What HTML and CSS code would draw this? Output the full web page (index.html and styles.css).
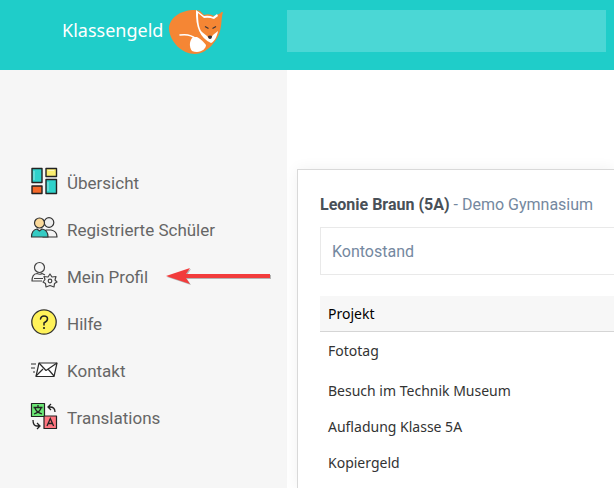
FILE: index.html
```html
<!DOCTYPE html>
<html lang="de">
<head>
    <meta charset="UTF-8">
    <title>Klassengeld</title>
    <link rel="stylesheet" href="styles.css">
</head>
<body>
<header class="header">
    <a href="#" class="logo">
        <span class="logo-text">Klassengeld</span>
        <svg class="logo-fox" viewBox="0 0 56 46" aria-hidden="true">
            <path fill="#f58634" d="M1 20C1 9 12 1 27 1L46 4L55 3C53 10 54 15 52 22C49 33 38 45 27 45C14 45 2 33 1 20Z"/>
            <path fill="#1fcdc9" d="M30 0L36 6Q41 4 46 7L53 4L52 0Z"/>
            <path fill="#fff" d="M28 1L36 7Q41 6 45 8L49 5L50 7L46 10Q41 8 36 9L30 4C30 13 31 20 34 23L39 27Q42 32 45 26L50 22C49 28 46 33 43 34Q27 27 28 1Z"/>
            <path fill="#fff" d="M38 36C34 31 31 29 29 28L25 28C21 32 21 38 24 42C32 45 38 40 38 36Z"/>
            <path fill="none" stroke="#fff" stroke-width="1.500" stroke-linecap="round" d="M12 26C19 25 25 27 28 30"/>
            <path fill="none" stroke="#3d3436" stroke-width="1.200" d="M37 17.500L40.500 19.500M48 17.500L44.500 19.500"/>
            <path fill="#3d3436" d="M40 27Q42 26 44 27Q44 30 42 30Q40 30 40 27Z"/>
        </svg>
    </a>
    <input type="search" class="search" aria-label="Suche">
</header>
<div class="layout">
    <nav class="sidebar">
        <a href="#" class="menu-item">
            <svg class="menu-icon" viewBox="0 0 28 28">
                <g stroke="#222" stroke-width="1.400" stroke-linejoin="round">
                    <path fill="#2fd2cb" d="M2 1.500H12V15.500H2ZM16 12.500H26.500V26.500H16Z"/>
                    <path fill="#fbee70" d="M16 1.500H26.500V9.500H16Z"/>
                    <path fill="#f4692a" d="M2 19H12V26.500H2Z"/>
                </g>
                <path fill="none" stroke="#fff" stroke-opacity=".5" d="M4 4V13M18 15V24M18 3.500H24"/>
            </svg>
            Übersicht
        </a>
        <a href="#" class="menu-item">
            <svg class="menu-icon" viewBox="0 0 28 28">
                <g stroke="#333" stroke-width="1.200" stroke-linejoin="round">
                    <path fill="#f4f4f4" d="M13 23H27Q27 17 21 16H16Z"/>
                    <circle cx="19" cy="8.500" r="4.800" fill="#eee"/>
                    <path fill="#35cbc3" d="M1.500 23Q1.500 16 7 15L9.500 17L12 15Q18 16 18 23Z"/>
                    <circle cx="9.500" cy="9" r="5" fill="#fbd99a"/>
                </g>
            </svg>
            Registrierte Schüler
        </a>
        <a href="#" class="menu-item">
            <svg class="menu-icon" viewBox="0 0 28 28">
                <g fill="none" stroke="#444" stroke-width="1.200" stroke-linejoin="round">
                    <circle cx="9.500" cy="6.500" r="5"/>
                    <path d="M12 20H2Q2 13 7 12.500Q10 14 12 12.500L15 14M13 17.500H4"/>
                    <path fill="#f5f5f5" d="M20 13L22 16L26 15.500L25 19L27 21L24.500 22.500L24 26L20 24.500L16 26L15.500 22.500L13 21L15 18.500L14 15.500L18 16Z"/>
                    <circle cx="20" cy="20" r="1.800"/>
                </g>
            </svg>
            Mein Profil
        </a>
        <a href="#" class="menu-item">
            <svg class="menu-icon" viewBox="0 0 28 28">
                <circle cx="14" cy="14" r="12.200" fill="#fff25a" stroke="#333" stroke-width="1.300"/>
                <path fill="none" stroke="#222" stroke-width="1.500" stroke-linecap="round" d="M10.500 11Q11 8 14 8Q17.500 8 17.500 11Q17.500 13 14 15V17"/>
                <circle cx="14" cy="20" r="1.100" fill="#222"/>
            </svg>
            Hilfe
        </a>
        <a href="#" class="menu-item">
            <svg class="menu-icon" viewBox="0 0 28 28">
                <g fill="none" stroke="#2b2b2b" stroke-width="1.200" stroke-linejoin="round">
                    <path fill="#fff" d="M9 8H27L24 21.500H6Z"/>
                    <path d="M9 8L16 15.500L27 8M6 21L13 14M24 21L18 14M1 9H6M1 13H5M3 17H5"/>
                </g>
            </svg>
            Kontakt
        </a>
        <a href="#" class="menu-item">
            <svg class="menu-icon" viewBox="0 0 28 28">
                <g stroke="#222" stroke-width="1.200" stroke-linejoin="round">
                    <path fill="#6be675" d="M1.500 1.500H14.500V14.500H1.500Z"/>
                    <path fill="#ff7680" d="M14 14H26.500V26.500H14Z"/>
                </g>
                <g fill="none" stroke="#222" stroke-width="1.300">
                    <path d="M8 3V5M3.500 5.500H12.500M5 6Q6 10 12 12M11 6Q10 10 4 12"/>
                    <path d="M17 24L20.300 16.500L23.600 24M18 21.500H23"/>
                    <path d="M18 5H20Q25 5 25 10M21 2L18 5L21 8M3 18Q3 24 7 24H9M7 21L10 24L7 27"/>
                </g>
            </svg>
            Translations
        </a>
        <svg class="pointer" viewBox="0 0 106 20" aria-hidden="true">
            <path fill="#888" fill-opacity=".6" d="M1 11L25 3L21 9H105V13H21L25 19Z"/>
            <path fill="#f23c3c" d="M0 10L24 2L20 8H104V12H20L24 18Z"/>
        </svg>
    </nav>
    <main class="content">
        <section class="card">
            <h1 class="student"><strong>Leonie Braun (5A)</strong> - Demo Gymnasium</h1>
            <div class="balance">Kontostand</div>
            <table class="projects">
                <thead>
                    <tr><th>Projekt</th></tr>
                </thead>
                <tbody>
                    <tr class="first"><td>Fototag</td></tr>
                    <tr><td>Besuch im Technik Museum</td></tr>
                    <tr><td>Aufladung Klasse 5A</td></tr>
                    <tr><td>Kopiergeld</td></tr>
                </tbody>
            </table>
        </section>
    </main>
</div>
</body>
</html>
```
FILE: styles.css
```css
* {
    box-sizing: border-box;
}
body {
    margin: 0;
    min-height: 100vh;
    display: flex;
    flex-direction: column;
    font-family: Roboto, sans-serif;
    background: #fff;
}
.header {
    display: flex;
    align-items: flex-start;
    height: 70px;
    padding: 9px 8px 0 0;
    background: #1fcdc9;
}
.logo {
    display: flex;
    flex: 0 0 287px;
    gap: 5px;
    padding-left: 62px;
    color: #fff;
    text-decoration: none;
}
.logo-text {
    font-family: "Noto Sans", sans-serif;
    font-size: 18px;
    line-height: 42px;
}
.logo-fox {
    width: 56px;
    height: 46px;
}
.search {
    flex: 1;
    min-width: 0;
    height: 42px;
    margin-top: 1px;
    padding: 0 12px;
    border: none;
    border-radius: 0;
    background: #4bd7d5;
    outline: none;
}
.layout {
    display: flex;
    flex: 1;
}
.sidebar {
    position: relative;
    flex: 0 0 287px;
    padding: 89px 0 32px 30px;
    background: #f6f6f6;
}
.menu-item {
    display: flex;
    align-items: center;
    gap: 9px;
    height: 47px;
    color: #666;
    font-size: 17px;
    text-decoration: none;
}
.menu-icon {
    width: 28px;
    height: 28px;
    margin-bottom: 4px;
}
.pointer {
    position: absolute;
    left: 166px;
    top: 196px;
    width: 106px;
    height: 20px;
}
.content {
    flex: 1;
    min-width: 0;
    padding: 99px 0 0 10px;
}
.card {
    height: 100%;
    padding: 23px 0 0 22px;
    border: 1px solid #d9d9d9;
    border-width: 1px 0 0 1px;
    box-shadow: 0 0 14px rgba(0, 0, 0, 0.06);
    clip-path: inset(-20px 0 0 -20px);
}
.student {
    margin: 0 0 10px;
    color: #7488a0;
    font-size: 16px;
    font-weight: 400;
    line-height: 24px;
}
.student strong {
    color: #495057;
    font-weight: 700;
}
.balance {
    height: 48px;
    margin-bottom: 21px;
    padding: 0 11px;
    border: 1px solid #e9e9e9;
    border-right: none;
    color: #7488a0;
    font-size: 16px;
    line-height: 48px;
}
.projects {
    width: 100%;
    border-collapse: collapse;
    font-family: "Noto Sans", sans-serif;
    font-size: 14px;
    line-height: 19px;
    color: #333;
}
.projects th,
.projects td {
    padding: 9px 8px 8px;
    text-align: left;
    font-weight: 400;
}
.projects th {
    padding-top: 8px;
    background: #f7f7f7;
    border-bottom: 1px solid #d5d5d5;
    color: #000;
}
.projects .first td {
    padding-bottom: 12px;
}
```
